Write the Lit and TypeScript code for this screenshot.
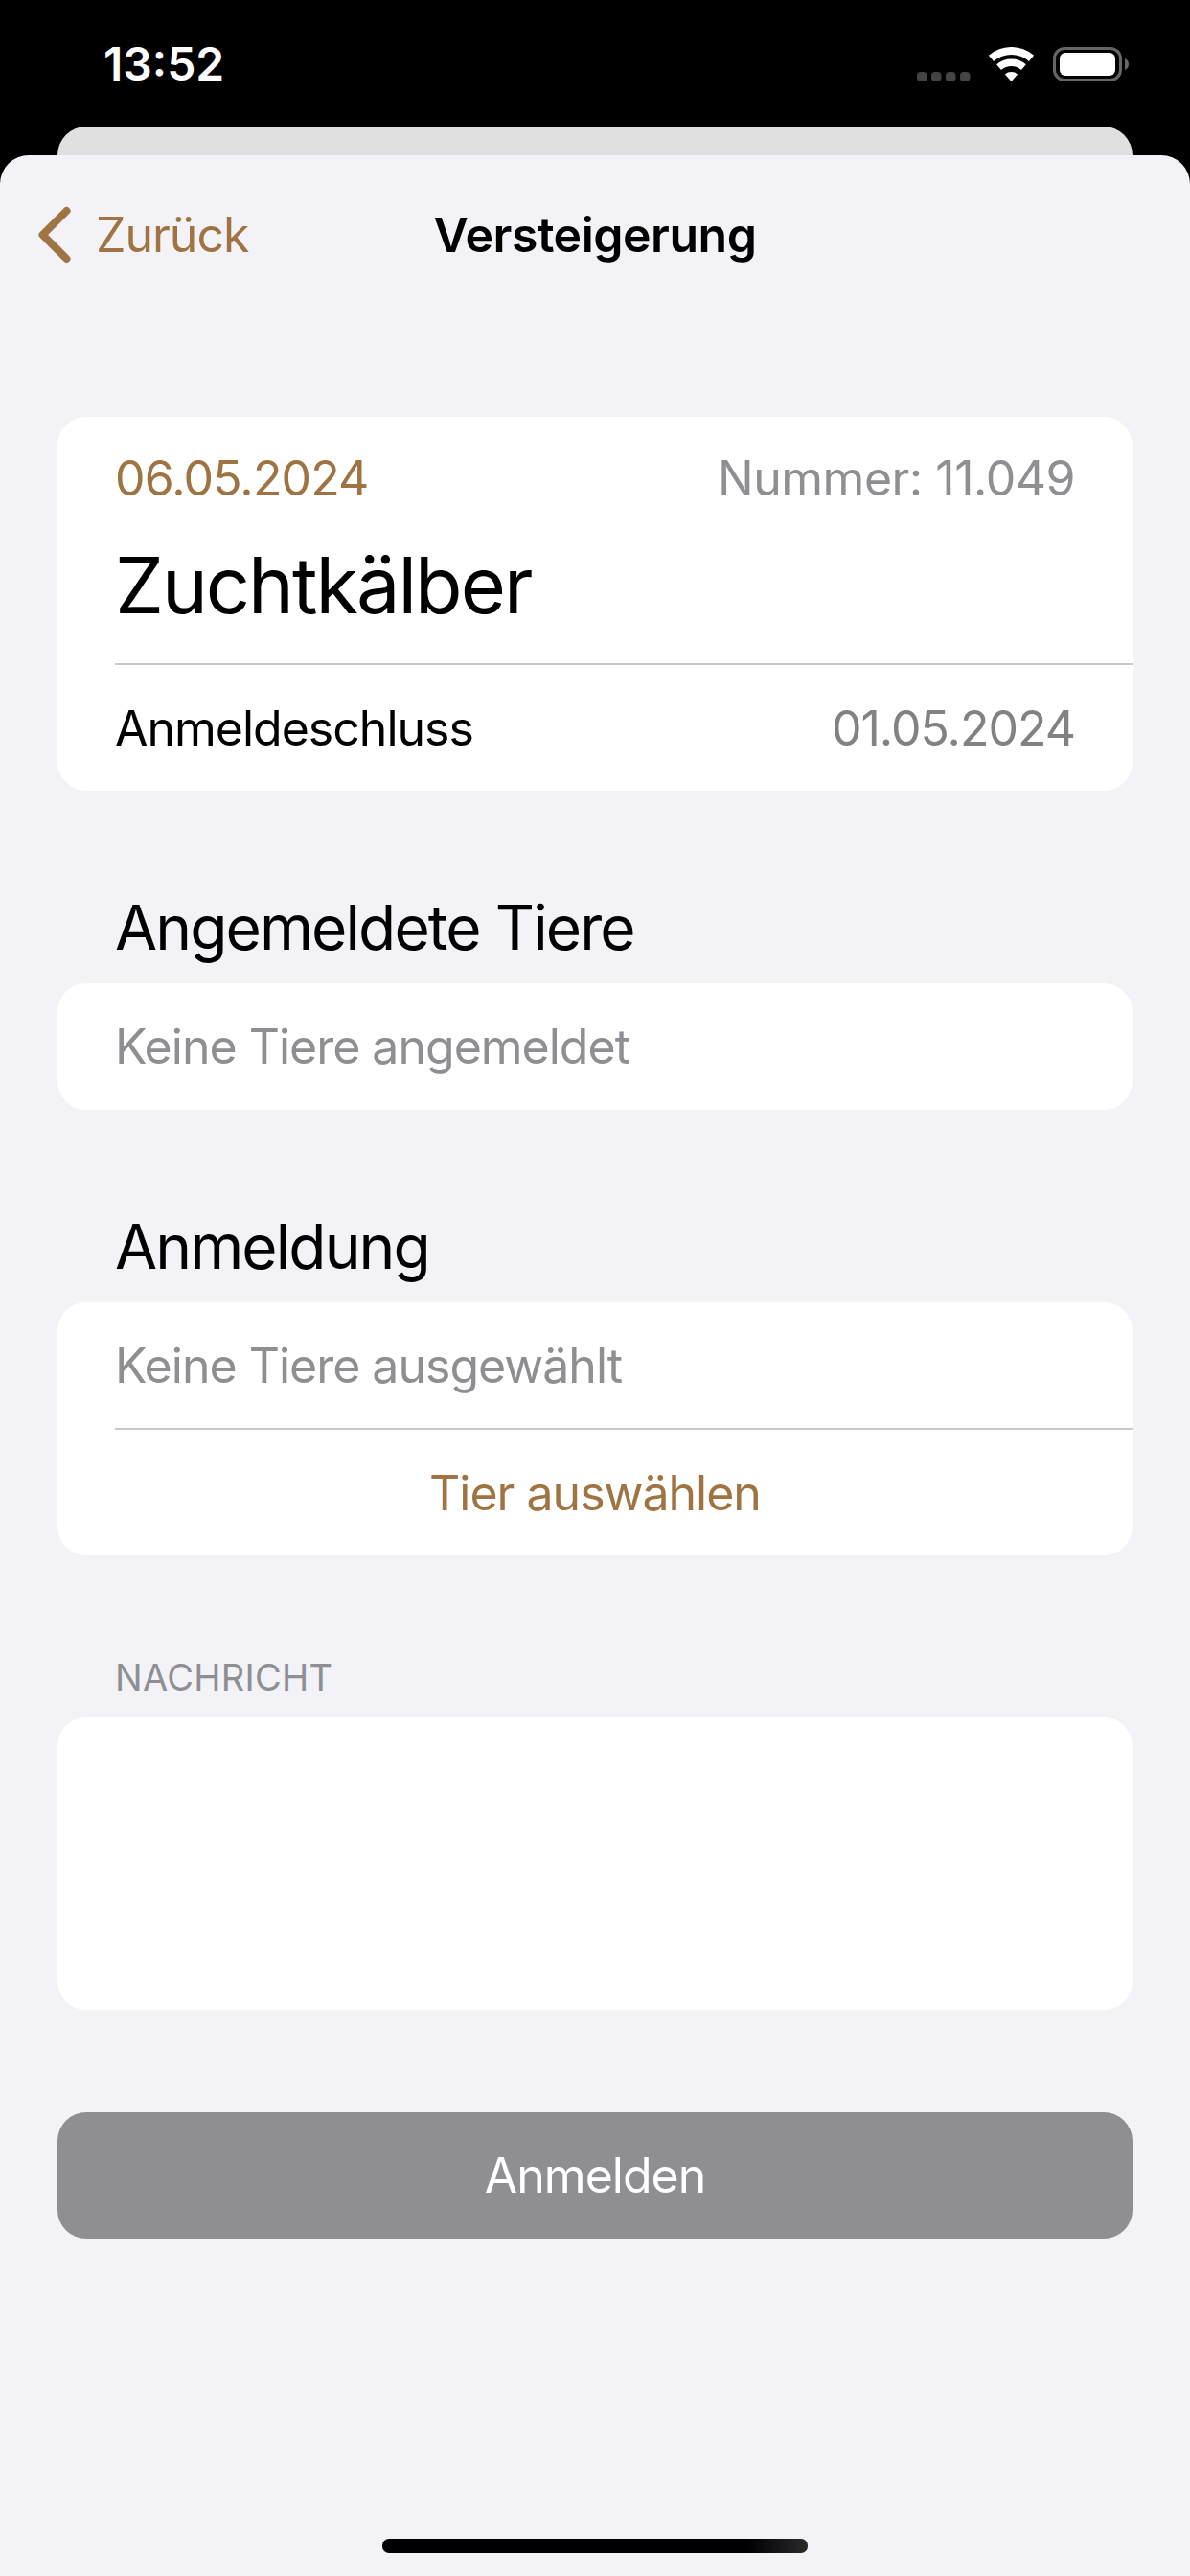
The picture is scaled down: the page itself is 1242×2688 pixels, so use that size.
import { LitElement, html, css } from 'lit';
import { customElement } from 'lit/decorators.js';

@customElement('app-root')
export class AppRoot extends LitElement {
  static styles = css`
    :host {
      display: block;
      width: 1242px;
      height: 2688px;
      background: #000;
      font-family: Inter, "Liberation Sans", sans-serif;
      overflow: hidden;
    }

    .status {
      height: 132px;
      display: flex;
      justify-content: space-between;
      padding: 0 64px 0 108px;
      box-sizing: border-box;
      color: #fff;
    }

    .time {
      font-size: 48px;
      font-weight: 600;
      line-height: 48px;
      margin-top: 43px;
    }

    .status-icons {
      margin-top: 49px;
    }

    .status-icons svg {
      display: block;
    }

    .behind {
      height: 30px;
      margin: 0 60px;
      background: #e0e0e0;
      border-radius: 30px 30px 0 0;
    }

    .sheet {
      height: 2526px;
      box-sizing: border-box;
      background: #f2f2f7;
      border-radius: 30px 30px 0 0;
      display: flex;
      flex-direction: column;
      position: relative;
    }

    .nav {
      height: 166px;
      display: grid;
      grid-template-columns: 1fr auto 1fr;
      align-items: center;
      padding: 0 38px;
    }

    .back {
      display: flex;
      align-items: center;
      gap: 22px;
      color: #a07442;
      font-size: 50px;
      letter-spacing: -1px;
    }

    .back svg {
      display: block;
    }

    .nav-title {
      font-size: 50px;
      font-weight: 600;
      letter-spacing: -0.5px;
      color: #000;
    }

    .content {
      padding: 107px 60px 0;
      display: flex;
      flex-direction: column;
    }

    .card {
      background: #fff;
      border-radius: 30px;
    }

    .row {
      height: 131px;
      display: flex;
      align-items: center;
      justify-content: space-between;
      padding: 0 60px;
      font-size: 50px;
      letter-spacing: -1px;
      color: #000;
    }

    .row.single {
      height: 132px;
    }

    .divider {
      height: 2px;
      margin-left: 60px;
      background: #c8c8cb;
    }

    .top-row {
      display: flex;
      justify-content: space-between;
      padding: 33px 60px 0;
      font-size: 50px;
      letter-spacing: -0.85px;
      line-height: 62px;
    }

    .date {
      color: #a07442;
    }

    .number {
      letter-spacing: -0.5px;
    }

    .grey {
      color: #8e8e93;
    }

    .deadline {
      color: #828282;
    }

    .headline {
      font-size: 81px;
      letter-spacing: -2px;
      line-height: 100px;
      margin: 31px 60px 31px;
      color: #000;
    }

    .section {
      font-size: 64px;
      letter-spacing: -1.9px;
      line-height: 80px;
      margin: 103px 60px 18px;
      color: #000;
    }

    .link {
      justify-content: center;
      color: #a07442;
    }

    .caption {
      font-size: 38px;
      letter-spacing: 0.3px;
      line-height: 46px;
      margin: 104px 60px 19px;
      color: #8e8e93;
    }

    .message {
      height: 305px;
    }

    .submit {
      height: 132px;
      margin-top: 107px;
      background: #8e8e93;
      border-radius: 30px;
      display: flex;
      align-items: center;
      justify-content: center;
      color: #fff;
      font-size: 50px;
      letter-spacing: -1px;
    }

    .home {
      position: absolute;
      left: 399px;
      bottom: 24px;
      width: 444px;
      height: 15px;
      border-radius: 7px;
      background: linear-gradient(90deg, #000 86%, #2a2a2a 100%);
    }
  `;

  render() {
    return html`
      <div class="status">
        <div class="time">13:52</div>
        <div class="status-icons">
          <svg width="221" height="36" viewBox="0 0 221 36">
            <g fill="#444">
              <rect x="0" y="26" width="10.5" height="10" rx="4"/>
              <rect x="15" y="26" width="10.5" height="10" rx="4"/>
              <rect x="30" y="26" width="10.5" height="10" rx="4"/>
              <rect x="45" y="26" width="10.5" height="10" rx="4"/>
            </g>
            <g fill="#fff">
              <path d="M74.9 8.8 A36 36 0 0 1 122.1 8.8 L116.9 14.9 A28 28 0 0 0 80.1 14.9 Z"/>
              <path d="M83.1 18.3 A23.5 23.5 0 0 1 113.9 18.3 L109 23.9 A16 16 0 0 0 88 23.9 Z"/>
              <path d="M91.9 28.5 A10 10 0 0 1 105.1 28.5 L98.5 36 Z"/>
            </g>
            <rect x="143.5" y="1.5" width="69" height="33" rx="10.5" fill="none" stroke="#666" stroke-width="3"/>
            <rect x="149" y="6" width="58" height="24" rx="6" fill="#fff"/>
            <path d="M217 12 C220 13 221 15.5 221 18 C221 20.5 220 23 217 24 Z" fill="#666"/>
          </svg>
        </div>
      </div>
      <div class="behind"></div>
      <div class="sheet">
        <div class="nav">
          <div class="back">
            <svg width="40" height="60" viewBox="0 0 40 60"><path d="M31.5 5 L6.5 30 L31.5 55" fill="none" stroke="#a07442" stroke-width="8" stroke-linecap="round" stroke-linejoin="round"/></svg>
            <span>Zurück</span>
          </div>
          <div class="nav-title">Versteigerung</div>
          <div></div>
        </div>
        <div class="content">
          <div class="card">
            <div class="top-row">
              <span class="date">06.05.2024</span>
              <span class="grey number">Nummer: 11.049</span>
            </div>
            <div class="headline">Zuchtkälber</div>
            <div class="divider"></div>
            <div class="row"><span>Anmeldeschluss</span><span class="deadline">01.05.2024</span></div>
          </div>
          <div class="section">Angemeldete Tiere</div>
          <div class="card">
            <div class="row single"><span class="grey">Keine Tiere angemeldet</span></div>
          </div>
          <div class="section">Anmeldung</div>
          <div class="card">
            <div class="row"><span class="grey">Keine Tiere ausgewählt</span></div>
            <div class="divider"></div>
            <div class="row link">Tier auswählen</div>
          </div>
          <div class="caption">NACHRICHT</div>
          <div class="card message"></div>
          <div class="submit">Anmelden</div>
        </div>
        <div class="home"></div>
      </div>
    `;
  }
}
